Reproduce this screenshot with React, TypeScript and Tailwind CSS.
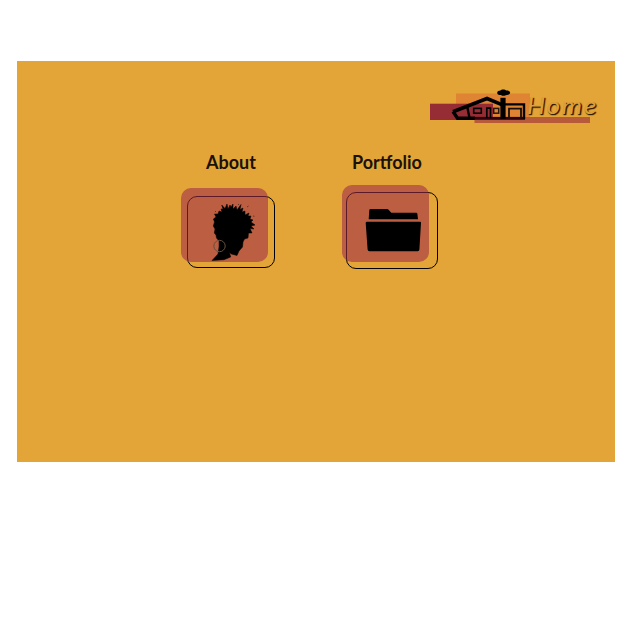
import React from "react";

function HomeLogo() {
  return (
    <svg className="block" width="176" height="40" viewBox="430 86 176 40" aria-label="Home">
      <rect x="456" y="93.5" width="74" height="26.5" fill="#de8433" />
      <rect x="430" y="103.7" width="63" height="16.3" fill="#962d35" />
      <rect x="474.5" y="117" width="115.5" height="6" fill="#b65a39" />
      <path d="M453 111.8 L487 98.5 L503 105.2" fill="none" stroke="#000" strokeWidth="3.6" />
      <path d="M453 111.5 L457.5 118.2 H475" fill="none" stroke="#000" strokeWidth="3.4" />
      <path d="M467 105.5 L469.5 118" fill="none" stroke="#000" strokeWidth="2.4" />
      <rect x="474.5" y="116.9" width="50.5" height="2.9" fill="#2c0311" />
      <rect x="473.7" y="108.4" width="7.6" height="4.8" fill="none" stroke="#000" strokeWidth="1.6" />
      <path d="M486.8 118 V108.2 H490.5 V118" fill="none" stroke="#000" strokeWidth="1.7" />
      <rect x="493.7" y="108.4" width="5" height="4.8" fill="none" stroke="#29180a" strokeWidth="1.5" />
      <rect x="500.4" y="97.8" width="5.2" height="21" fill="#000" />
      <path d="M497.2 92.9 C497 91.2 499 90.8 500 90.8 C501.5 89 505 89.2 506.5 90.6 C509 90.5 510.6 91.7 510 93.2 C509.5 94.8 507 94.7 505.8 95.2 C504 96.2 502 96 501 95 C499 95.2 497.3 94.5 497.2 92.9Z" fill="#000" />
      <path d="M505 104.4 H524 V119" fill="none" stroke="#000" strokeWidth="2.4" />
      <path d="M509 118 V108.6 H521 V118" fill="none" stroke="#17100a" strokeWidth="1.8" />
      <text
        x="527"
        y="113.7"
        fontSize="23"
        fontStyle="italic"
        letterSpacing="1.6"
        textLength="71"
        lengthAdjust="spacingAndGlyphs"
        className="fill-[#dda037] font-['Lato',sans-serif] [text-shadow:1px_1px_1px_#2b1905,1px_1px_1px_#4b2f0a]"
      >
        Home
      </text>
    </svg>
  );
}

function AboutIcon() {
  return (
    <svg className="absolute left-[24px] top-[7px]" width="60" height="70" viewBox="0 0 60 70">
      <path
        d="M7 65.5 L13 59 L14 52 L14 46 L11.5 43 L11 40 L9.3 38 L10 34 L8.3 31 L9.5 27 L8.4 24 L11 22 L9.5 19 L13 19 L14 16 L17 17 L16 14 L18 14 L16.7 10 L20 13.5 L22 9 L23 14 L25 10 L26 12 L28 9 L28 14 L31 11 L32 15 L36 9.5 L35 14.5 L38 13 L37 17 L40 16 L40 20 L44 18 L43 21 L46 21 L45 24 L48 25 L46 27 L50 30 L46 31 L49 34 L45 33.5 L47 38 L43.5 38 L43 43 L39.5 44 L38 47 L37.5 52 L34 56 L32 60.5 L26.3 59 L24.5 57.5 L25.7 62 L19 64.7Z"
        stroke="#000"
        strokeWidth=".5"
      />
      <circle cx="14.5" cy="51" r="5.7" fill="none" stroke="#65503c" strokeWidth="1" />
      <path d="M42 12l1.5-1M11 17l-1-1M48 21l1.4.3M33 10l1-1" stroke="#65352a" />
    </svg>
  );
}

function FolderIcon() {
  return (
    <svg className="absolute left-[23px] top-[22px]" width="58" height="46" viewBox="365 207 58 46">
      <path d="M370.5 209 H387 Q388 209 389 210.2 L391.3 212.8 H416.3 Q417.3 212.8 417.4 214 L418 219.2 H368.7 L369.3 210.2 Q369.4 209 370.5 209Z" />
      <path d="M367 221.7 H420 Q421.2 221.7 421 223 L419.4 249.5 Q419.3 251.2 417.8 251.2 H369.3 Q367.8 251.2 367.6 249.5 L365.7 223 Q365.6 221.7 367 221.7Z" />
    </svg>
  );
}

export default function App() {
  return (
    <div className="h-[640px] w-[640px] overflow-hidden bg-white pl-[17px] pt-[61px]">
      <main className="flex h-[401px] w-[598px] flex-col bg-[#e4a538] text-black">
        <header className="flex h-[65px] shrink-0 items-end justify-end pr-[9px]">
          <HomeLogo />
        </header>
        <nav className="flex pl-[164px] pt-[24px] font-['Lato',sans-serif] text-[18px] font-bold leading-[24px]">
          <a className="w-[161px]">
            <span className="ml-[25px] block whitespace-nowrap text-[#1a1206]">About</span>
            <div className="relative mt-[14px] h-[74px] w-[87px]">
              <div className="absolute left-[6px] top-[8px] h-[72px] w-[88px] rounded-[10px] border border-black" />
              <div className="absolute inset-0 rounded-[10px] bg-[#9e2b48]/58" />
              <AboutIcon />
            </div>
          </a>
          <a className="w-[100px]">
            <span className="ml-[10px] block whitespace-nowrap text-[#1a1206]">Portfolio</span>
            <div className="relative mt-[11px] h-[77px] w-[87px]">
              <div className="absolute left-[4px] top-[7px] h-[77px] w-[92px] rounded-[10px] border border-black" />
              <div className="absolute inset-0 rounded-[10px] bg-[#9e2b48]/58" />
              <FolderIcon />
            </div>
          </a>
        </nav>
      </main>
    </div>
  );
}
